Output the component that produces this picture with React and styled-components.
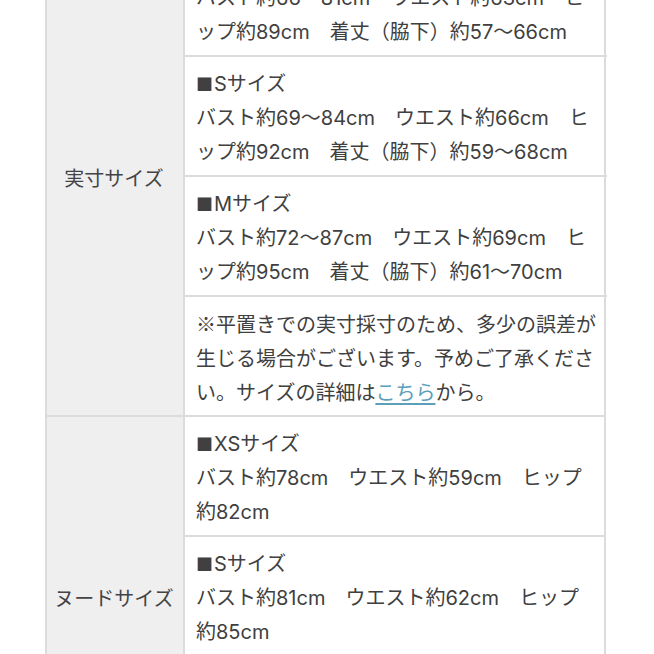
import React from 'react';
import styled, { createGlobalStyle } from 'styled-components';

const GlobalStyle = createGlobalStyle`
  html, body {
    margin: 0;
    padding: 0;
    background: #ffffff;
  }
  body {
    font-family: Inter, "Noto Sans CJK JP", sans-serif;
    color: #404040;
    overflow: hidden;
  }
`;

const Page = styled.div`
  width: 654px;
  height: 654px;
  overflow: hidden;
`;

const SpecTable = styled.div`
  margin: -63px 0 0 45px;
  width: 561px;
  box-sizing: border-box;
  border-left: 2px solid #dcdcdc;
  border-right: 2px solid #dcdcdc;
`;

const Section = styled.div`
  display: grid;
  grid-template-columns: 138px 1fr;
  border-bottom: 2px solid #dcdcdc;
`;

const Label = styled.div`
  background: #efefef;
  border-right: 2px solid #dcdcdc;
  display: flex;
  align-items: center;
  justify-content: center;
  font-size: 20px;
  color: #444;
  padding: 2px 2px 0 0;
`;

const Cells = styled.div`
  display: flex;
  flex-direction: column;
`;

const Cell = styled.div`
  padding: 10px 11px 6px;
  font-size: 20px;
  line-height: 34px;
  border-bottom: 2px solid #dcdcdc;
  white-space: nowrap;

  &:last-child {
    border-bottom: none;
  }
`;

const NoteCell = styled(Cell)`
  font-family: "Noto Sans CJK JP", sans-serif;
`;

const Line = styled.div``;

const Mark = styled.span`
  font-family: "Noto Sans CJK JP", sans-serif;
  font-size: 17px;
  margin-right: 1px;
`;

const Link = styled.a`
  color: #5b9fba;
  text-decoration: underline;
  text-underline-offset: 3px;
`;

const actual = [
  ['XSサイズ', 'バスト約66～81cm　ウエスト約63cm　ヒ', 'ップ約89cm　着丈（脇下）約57～66cm'],
  ['Sサイズ', 'バスト約69～84cm　ウエスト約66cm　ヒ', 'ップ約92cm　着丈（脇下）約59～68cm'],
  ['Mサイズ', 'バスト約72～87cm　ウエスト約69cm　ヒ', 'ップ約95cm　着丈（脇下）約61～70cm'],
];

const nude = [
  ['XSサイズ', 'バスト約78cm　ウエスト約59cm　ヒップ', '約82cm'],
  ['Sサイズ', 'バスト約81cm　ウエスト約62cm　ヒップ', '約85cm'],
  ['Mサイズ', 'バスト約84cm　ウエスト約65cm　ヒップ', '約88cm'],
];

const SizeCell = ({ title, lines }) => (
  <Cell>
    <Line>
      <Mark>■</Mark>
      {title}
    </Line>
    {lines.map((l) => (
      <Line key={l}>{l}</Line>
    ))}
  </Cell>
);

export default function App() {
  return (
    <Page>
      <GlobalStyle />
      <SpecTable lang="ja">
        <Section>
          <Label>実寸サイズ</Label>
          <Cells>
            {actual.map(([title, ...lines]) => (
              <SizeCell key={title} title={title} lines={lines} />
            ))}
            <NoteCell>
              <Line>※平置きでの実寸採寸のため、多少の誤差が</Line>
              <Line>生じる場合がございます。予めご了承くださ</Line>
              <Line>
                い。サイズの詳細は<Link href="#">こちら</Link>から。
              </Line>
            </NoteCell>
          </Cells>
        </Section>
        <Section>
          <Label>ヌードサイズ</Label>
          <Cells>
            {nude.map(([title, ...lines]) => (
              <SizeCell key={title} title={title} lines={lines} />
            ))}
          </Cells>
        </Section>
      </SpecTable>
    </Page>
  );
}
